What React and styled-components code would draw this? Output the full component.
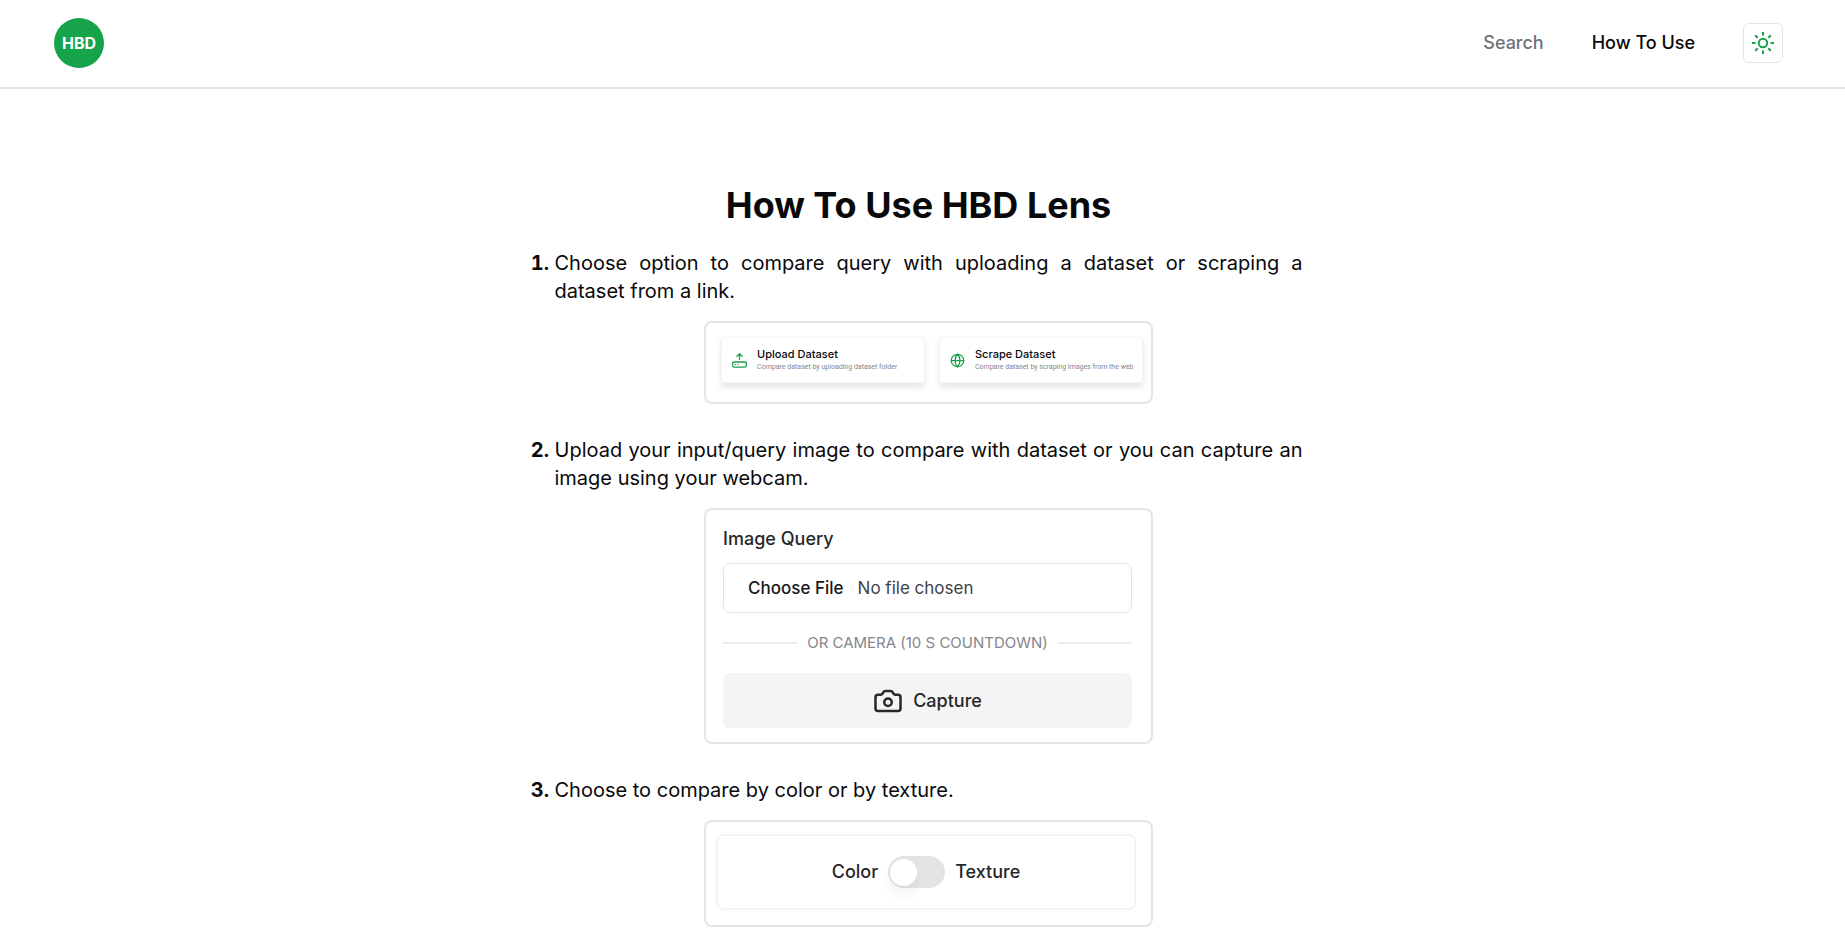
import React from "react";
import styled, { createGlobalStyle } from "styled-components";
import { Camera, Globe } from "lucide-react";

const GlobalStyle = createGlobalStyle`
  *, *::before, *::after { box-sizing: border-box; }
  body {
    margin: 0;
    padding-right: 8px;
    background: #fff;
    color: #09090b;
    font-family: Inter, "Liberation Sans", sans-serif;
    overflow-x: hidden;
  }
  button, input { font: inherit; color: inherit; }
`;

const Header = styled.header`
  display: flex;
  align-items: center;
  justify-content: space-between;
  margin-right: -8px;
  padding: 18px 62px 19px 54px;
  border-bottom: 2px solid #e4e4e7;
`;

const Logo = styled.a`
  display: grid;
  place-items: center;
  width: 50px;
  height: 50px;
  border-radius: 50%;
  background: #16a34a;
  color: #fff;
  font-size: 16px;
  font-weight: 700;
  text-decoration: none;
`;

const Nav = styled.nav`
  display: flex;
  align-items: center;
  gap: 48px;
`;

const NavLink = styled.a`
  color: ${(p) => (p.$active ? "#09090b" : "#71717a")};
  font-size: 18px;
  line-height: 28px;
  font-weight: 500;
  text-decoration: none;
`;

const ThemeButton = styled.button`
  display: grid;
  place-items: center;
  width: 40px;
  height: 40px;
  padding: 0;
  border: 1px solid #e4e4e7;
  border-radius: 6px;
  background: #fff;
  color: #16a34a;
`;

const Main = styled.main`
  max-width: 768px;
  margin: 0 auto;
  padding: 96px 0 40px;
`;

const Title = styled.h1`
  margin: 0 0 24px;
  font-size: 36px;
  line-height: 40px;
  font-weight: 700;
  text-align: center;
`;

const Steps = styled.ol`
  display: flex;
  flex-direction: column;
  gap: 32px;
  margin: 0;
  padding-left: 20px;
  font-size: 20px;
  line-height: 28px;
  text-align: justify;
`;

const Step = styled.li`
  &::marker { font-weight: 700; }
`;

const StepText = styled.p`
  margin: 0 0 16px;
`;

const Frame = styled.div`
  display: flex;
  width: 60%;
  margin: 0 auto;
  border: 2px solid #e4e4e7;
  border-radius: 8px;
  text-align: left;
`;

const DatasetFrame = styled(Frame)`
  gap: 14px;
  padding: 14px 8px 19px 15px;
`;

const OptionCard = styled.button`
  display: flex;
  flex: 1 1 0;
  align-items: center;
  gap: 10px;
  min-width: 0;
  height: 46px;
  padding: 0 10px;
  border: 1px solid #f4f4f5;
  border-radius: 3px;
  background: #fff;
  box-shadow: 0 4px 6px rgba(0, 0, 0, 0.1);
  text-align: left;
  white-space: nowrap;
  svg { flex: none; color: #16a34a; }
`;

const OptionTitle = styled.strong`
  display: block;
  font-size: 11px;
  line-height: 14px;
  font-weight: 500;
`;

const OptionNote = styled.span`
  display: block;
  color: #85858b;
  font-family: Roboto, "Liberation Sans", sans-serif;
  font-size: 7px;
  line-height: 12px;
`;

const QueryFrame = styled(Frame)`
  flex-direction: column;
  padding: 16px 19px 14px 17px;
`;

const FieldLabel = styled.label`
  color: #27272a;
  font-size: 18px;
  line-height: 26px;
  font-weight: 500;
`;

const FileBox = styled.div`
  position: relative;
  display: flex;
  align-items: center;
  gap: 14px;
  height: 50px;
  margin-top: 11px;
  padding: 0 24px;
  border: 1px solid #e4e4e7;
  border-radius: 7px;
  color: #3f3f46;
  font-size: 17px;
  b { color: #18181b; font-weight: 500; }
`;

const FileInput = styled.input`
  position: absolute;
  inset: 0;
  width: 100%;
  opacity: 0;
`;

const Divider = styled.div`
  display: flex;
  align-items: center;
  gap: 10px;
  margin: 18px 0;
  color: #85858b;
  font-size: 15px;
  line-height: 24px;
  white-space: nowrap;
  &::before, &::after {
    content: "";
    flex: 1;
    height: 2px;
    background: #ececee;
  }
`;

const CaptureButton = styled.button`
  display: flex;
  align-items: center;
  justify-content: center;
  gap: 10px;
  height: 55px;
  border: 0;
  border-radius: 7px;
  background: #f4f4f5;
  color: #27272a;
  font-size: 18px;
  font-weight: 500;
`;

const SwitchFrame = styled(Frame)`
  padding: 12px 15px 15px 10px;
`;

const SwitchPanel = styled.div`
  display: flex;
  flex: 1;
  align-items: center;
  justify-content: center;
  gap: 10px;
  height: 76px;
  border: 2px solid #f4f4f5;
  border-radius: 7px;
  color: #27272a;
  font-size: 18px;
  font-weight: 500;
`;

const Switch = styled.input`
  appearance: none;
  display: flex;
  align-items: center;
  width: 57px;
  height: 32px;
  margin: 0;
  padding: 2px;
  border-radius: 16px;
  background: #e4e4e7;
  &::before {
    content: "";
    width: 27px;
    height: 27px;
    border-radius: 50%;
    background: #fff;
    box-shadow: 0 8px 12px rgba(0, 0, 0, 0.06);
  }
  &:checked { justify-content: flex-end; background: #16a34a; }
`;

const SunIcon = () => (
  <svg width="24" height="24" viewBox="0 0 24 24" fill="none" stroke="currentColor" strokeWidth="2" aria-hidden="true">
    <circle cx="12" cy="12" r="4.2" />
    <path d="M12 1v3.5M12 19.5V23M1 12h3.5M19.5 12H23M4.2 4.2l2.5 2.5M17.3 17.3l2.5 2.5M4.2 19.8l2.5-2.5M17.3 6.7l2.5-2.5" />
  </svg>
);

const UploadIcon = () => (
  <svg width="15" height="15" viewBox="0 0 14 14" fill="none" stroke="currentColor" strokeWidth="1.2" strokeLinecap="round" strokeLinejoin="round" aria-hidden="true">
    <rect x="0.7" y="8.4" width="12.6" height="4.8" rx="1" />
    <path d="M7 6V0.8M4.6 3L7 0.7 9.4 3M3.2 10.8h.1M5.4 10.8h.1" />
  </svg>
);

export default function App() {
  return (
    <>
      <GlobalStyle />
      <Header>
        <Logo href="#home">HBD</Logo>
        <Nav>
          <NavLink href="#search">Search</NavLink>
          <NavLink href="#how-to-use" $active aria-current="page">How To Use</NavLink>
          <ThemeButton type="button" aria-label="Toggle theme"><SunIcon /></ThemeButton>
        </Nav>
      </Header>
      <Main>
        <Title>How To Use HBD Lens</Title>
        <Steps>
          <Step>
            <StepText>Choose option to compare query with uploading a dataset or scraping a dataset from a link.</StepText>
            <DatasetFrame>
              <OptionCard type="button">
                <UploadIcon />
                <span>
                  <OptionTitle>Upload Dataset</OptionTitle>
                  <OptionNote>Compare dataset by uploading dataset folder</OptionNote>
                </span>
              </OptionCard>
              <OptionCard type="button">
                <Globe size={15} />
                <span>
                  <OptionTitle>Scrape Dataset</OptionTitle>
                  <OptionNote>Compare dataset by scraping images from the web</OptionNote>
                </span>
              </OptionCard>
            </DatasetFrame>
          </Step>
          <Step>
            <StepText>Upload your input/query image to compare with dataset or you can capture an image using your webcam.</StepText>
            <QueryFrame>
              <FieldLabel htmlFor="query-file">Image Query</FieldLabel>
              <FileBox>
                <b>Choose File</b>
                <span>No file chosen</span>
                <FileInput id="query-file" type="file" accept="image/*" />
              </FileBox>
              <Divider>OR CAMERA (10 S COUNTDOWN)</Divider>
              <CaptureButton type="button"><Camera size={30} />Capture</CaptureButton>
            </QueryFrame>
          </Step>
          <Step>
            <StepText>Choose to compare by color or by texture.</StepText>
            <SwitchFrame>
              <SwitchPanel>
                <span>Color</span>
                <Switch type="checkbox" role="switch" aria-label="Compare by texture" />
                <span>Texture</span>
              </SwitchPanel>
            </SwitchFrame>
          </Step>
        </Steps>
      </Main>
    </>
  );
}
